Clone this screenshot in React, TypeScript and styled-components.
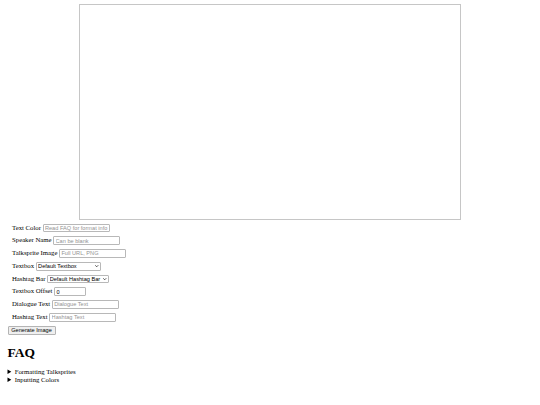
import React from "react";
import styled, { createGlobalStyle } from "styled-components";

const GlobalStyle = createGlobalStyle`
  html, body {
    margin: 0;
    padding: 0;
    background: #ffffff;
  }
  body {
    font-family: "Liberation Serif", "Times New Roman", serif;
    color: #000000;
  }
`;

const Page = styled.div`
  padding-top: 4px;
  width: 540px;
  box-sizing: border-box;
`;

const Preview = styled.div`
  display: block;
  box-sizing: border-box;
  width: 382px;
  height: 215.6px;
  margin: 0 auto;
  border: 1px solid #c6c6c6;
  background: #ffffff;
`;

const Form = styled.div`
  margin-top: 2px;
  padding-left: 7.5px;
  display: flex;
  flex-direction: column;
`;

const Row = styled.div`
  height: 12.75px;
  padding-left: 4.5px;
  display: flex;
  align-items: center;
  font-family: "Liberation Serif", "Times New Roman", serif;
  font-size: 6.75px;
  white-space: pre;
`;

const Label = styled.label`
  font-size: 6.75px;
  line-height: 1;
  margin-right: 1.7px;
`;

const TextInput = styled.input<{ $w?: number }>`
  box-sizing: border-box;
  width: ${(p) => p.$w ?? 67}px;
  height: 8.9px;
  padding: 0 0 0 1.3px;
  margin: 0;
  border: 1px solid #b8b8b8;
  border-radius: 1px;
  background: #ffffff;
  font-family: "Liberation Sans", Arial, sans-serif;
  font-size: 5.625px;
  color: #000000;
  outline: none;
  &::placeholder {
    color: #939393;
  }
  &::-webkit-inner-spin-button,
  &::-webkit-outer-spin-button {
    -webkit-appearance: none;
    margin: 0;
  }
  -moz-appearance: textfield;
`;

const SelectWrap = styled.span<{ $w: number }>`
  position: relative;
  display: inline-flex;
  width: ${(p) => p.$w}px;
  height: 8.9px;
`;

const Select = styled.select`
  appearance: none;
  -webkit-appearance: none;
  box-sizing: border-box;
  width: 100%;
  height: 100%;
  margin: 0;
  padding: 0 0 0 1.4px;
  border: 1px solid #b8b8b8;
  border-radius: 1px;
  background: #ffffff;
  font-family: "Liberation Sans", Arial, sans-serif;
  font-size: 5.625px;
  line-height: 6.9px;
  color: #000000;
  outline: none;
`;

const Chevron = styled.svg`
  position: absolute;
  right: 2.2px;
  top: 3.2px;
  width: 3.4px;
  height: 2.3px;
  pointer-events: none;
`;

const ButtonRow = styled.div`
  height: 12.75px;
  margin-top: 1px;
  display: flex;
  align-items: center;
`;

const Button = styled.button`
  box-sizing: border-box;
  height: 9px;
  width: 48px;
  padding: 0;
  margin: 0;
  border: 1px solid #b4b4b4;
  border-radius: 1px;
  background: #efefef;
  font-family: "Liberation Sans", Arial, sans-serif;
  font-size: 5.625px;
  line-height: 1;
  color: #000000;
  cursor: pointer;
`;

const Heading = styled.h1`
  margin: 7.25px 0 7.9px;
  font-family: "Liberation Serif", "Times New Roman", serif;
  font-size: 13.5px;
  font-weight: bold;
  line-height: 15.5px;
`;

const Faq = styled.details`
  font-family: "Liberation Serif", "Times New Roman", serif;
  font-size: 6.75px;
  line-height: 7.8px;
`;

const Summary = styled.summary`
  display: list-item;
  height: 7.8px;
  cursor: pointer;
`;

type Field =
  | { kind: "text"; label: string; placeholder?: string; value?: string; width?: number }
  | { kind: "select"; label: string; options: string[]; width: number };

const fields: Field[] = [
  { kind: "text", label: "Text Color", placeholder: "Read FAQ for format info" },
  { kind: "text", label: "Speaker Name", placeholder: "Can be blank" },
  { kind: "text", label: "Talksprite Image", placeholder: "Full URL, PNG" },
  {
    kind: "select",
    label: "Textbox",
    options: ["Default Textbox", "Alternate Textbox (Wide)"],
    width: 65.3,
  },
  { kind: "select", label: "Hashtag Bar", options: ["Default Hashtag Bar", "None"], width: 61.5 },
  { kind: "text", label: "Textbox Offset", value: "0", width: 32 },
  { kind: "text", label: "Dialogue Text", placeholder: "Dialogue Text" },
  { kind: "text", label: "Hashtag Text", placeholder: "Hashtag Text" },
];

const faqs = ["Formatting Talksprites", "Inputting Colors"];

export default function App() {
  return (
    <Page>
      <GlobalStyle />
      <Preview />
      <Form>
        {fields.map((f) => (
          <Row key={f.label}>
            <Label>{f.label}</Label>
            {f.kind === "text" ? (
              <TextInput
                type={f.value !== undefined ? "number" : "text"}
                placeholder={f.placeholder}
                defaultValue={f.value}
                $w={f.width}
              />
            ) : (
              <SelectWrap $w={f.width}>
                <Select defaultValue={f.options[0]}>
                  {f.options.map((o) => (
                    <option key={o}>{o}</option>
                  ))}
                </Select>
                <Chevron viewBox="0 0 8 5">
                  <polyline
                    points="1,1 4,4 7,1"
                    fill="none"
                    stroke="#222"
                    strokeWidth="1.8"
                    strokeLinecap="round"
                    strokeLinejoin="round"
                  />
                </Chevron>
              </SelectWrap>
            )}
          </Row>
        ))}
        <ButtonRow>
          <Button type="button">Generate Image</Button>
        </ButtonRow>
        <Heading>FAQ</Heading>
        {faqs.map((q) => (
          <Faq key={q}>
            <Summary>{q}</Summary>
          </Faq>
        ))}
      </Form>
    </Page>
  );
}
